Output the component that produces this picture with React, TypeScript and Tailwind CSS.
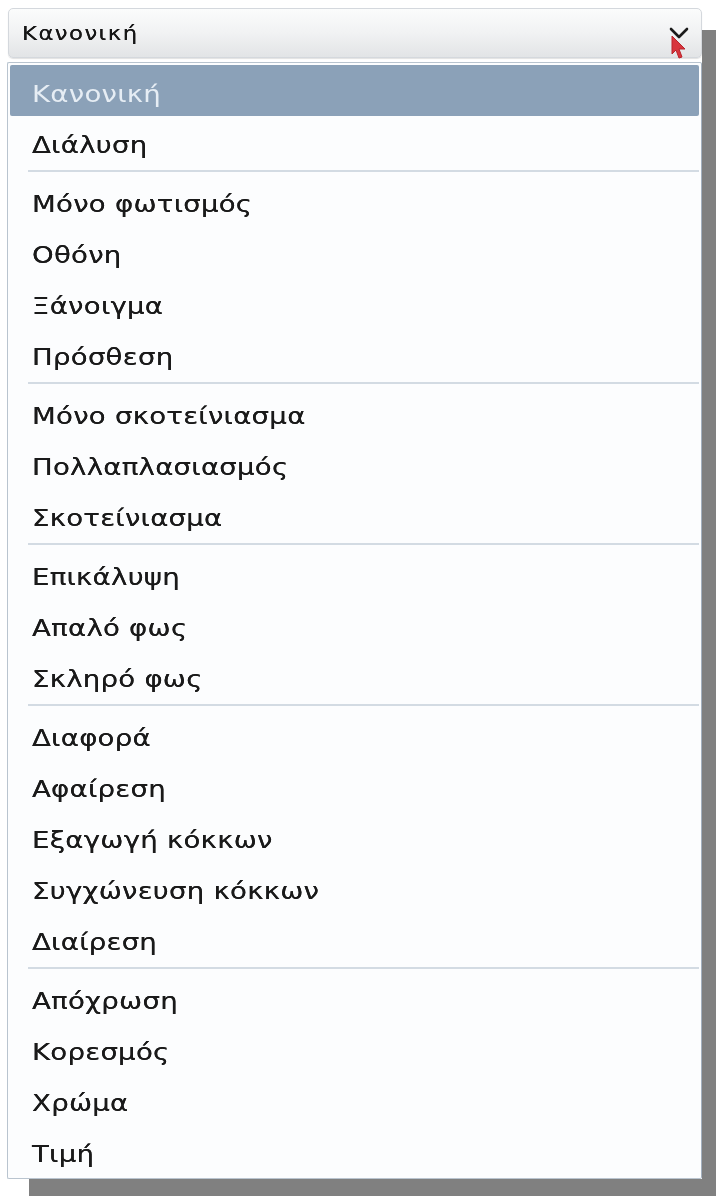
import { Fragment } from 'react';

const GROUPS: string[][] = [
  ['Κανονική', 'Διάλυση'],
  ['Μόνο φωτισμός', 'Οθόνη', 'Ξάνοιγμα', 'Πρόσθεση'],
  ['Μόνο σκοτείνιασμα', 'Πολλαπλασιασμός', 'Σκοτείνιασμα'],
  ['Επικάλυψη', 'Απαλό φως', 'Σκληρό φως'],
  ['Διαφορά', 'Αφαίρεση', 'Εξαγωγή κόκκων', 'Συγχώνευση κόκκων', 'Διαίρεση'],
  ['Απόχρωση', 'Κορεσμός', 'Χρώμα', 'Τιμή'],
];

const SELECTED = 'Κανονική';

function Chevron() {
  return (
    <svg width="20" height="12" viewBox="0 0 20 12" className="shrink-0">
      <path d="M2 2 L10 10 L18 2" fill="none" stroke="#1a1a1a" strokeWidth="2.6" strokeLinecap="round" strokeLinejoin="round" />
    </svg>
  );
}

function Pointer() {
  return (
    <svg width="16" height="26" viewBox="0 0 16 26" className="absolute left-[671px] top-[35px] blur-[0.6px]">
      <path d="M1 1 L1 19 L5 15 L8 23 L11 22 L8 14 L14 14 Z" fill="#d8343c" stroke="#b8232b" strokeWidth="1" strokeLinejoin="round" />
    </svg>
  );
}

export default function App() {
  return (
    <div className="relative w-[716px] h-[1196px] overflow-hidden bg-white pt-[8px] pl-[7px] font-['DejaVu_Sans',sans-serif]">
      <div className="w-[695px] bg-white shadow-[22px_22px_0_#808080] flex flex-col">
        {/* Combo box */}
        <div className="ml-[1px] h-[50px] flex items-center justify-between pl-[13px] pr-[12px] rounded-[5px] border border-[#d4d8dd] bg-gradient-to-b from-[#fbfcfc] via-[#f1f2f3] to-[#e2e4e6] shadow-[0_1px_1px_rgba(0,0,0,0.12)]">
          <span className="inline-block origin-left scale-x-[1.2] text-[19px] tracking-[1.2px] text-[#161616] [text-shadow:0_0_0.4px_#161616]">
            {SELECTED}
          </span>
          <Chevron />
        </div>

        {/* Drop-down list */}
        <div className="mt-[4px] border border-[#b9c4cf] border-r-[#a3b0bf] rounded-[2px] bg-[#fcfdfe] pt-[2px] pb-[2px] px-[2px]">
          {GROUPS.map((group, gi) => (
            <Fragment key={gi}>
              {gi > 0 && (
                <div className="h-[8px] flex items-center pl-[18px]">
                  <div className="h-[2px] flex-1 bg-[#d3dbe3]" />
                </div>
              )}
              {group.map((label) => {
                const active = label === SELECTED;
                return (
                  <div
                    key={label}
                    className={`h-[51px] flex items-center pl-[22px] pt-[7px] ${
                      active ? 'bg-[#8ba1b8] text-[#e6edf4] rounded-[2px]' : 'text-[#1a1a1a] [text-shadow:0_0_0.5px_#1a1a1a]'
                    }`}
                  >
                    <span className="inline-block origin-left scale-x-[1.2] text-[23px] tracking-[0.2px] whitespace-nowrap">
                      {label}
                    </span>
                  </div>
                );
              })}
            </Fragment>
          ))}
        </div>
      </div>
      <Pointer />
    </div>
  );
}
